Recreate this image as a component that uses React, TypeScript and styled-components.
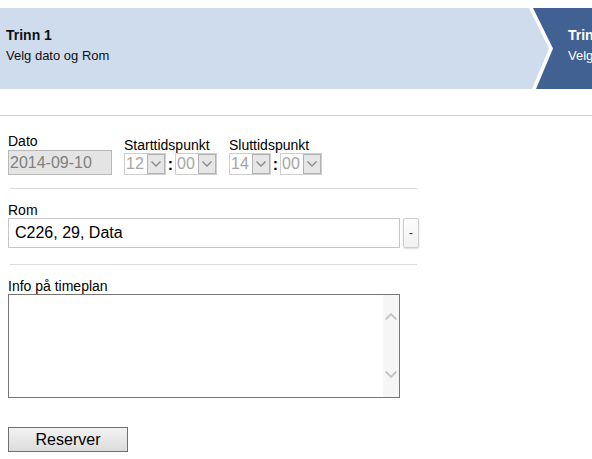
import { FC } from "react";
import { styled, createGlobalStyle } from "styled-components";

const GlobalStyle = createGlobalStyle`
  html, body {
    margin: 0;
    padding: 0;
    background: #fff;
    overflow: hidden;
  }
  body {
    font-family: "Liberation Sans", Arial, sans-serif;
    color: #000;
  }
`;

type ChevronProps = { dir: "up" | "down"; color: string; w: number; h: number; sw: number };

const Chevron: FC<ChevronProps> = ({ dir, color, w, h, sw }) => (
  <svg width={w} height={h} viewBox="0 0 10 6" fill="none">
    <path
      d={dir === "down" ? "M1 1 L5 5 L9 1" : "M1 5 L5 1 L9 5"}
      stroke={color}
      strokeWidth={sw}
      strokeLinecap="square"
    />
  </svg>
);

type TimeSelectProps = { value: string };

const TimeSelect: FC<TimeSelectProps> = ({ value }) => (
  <SelectBox>
    <span className="value">{value}</span>
    <span className="arrow">
      <Chevron dir="down" color="#8a8a8a" w={10} h={6} sw={1.4} />
    </span>
  </SelectBox>
);

export default function App() {
  return (
    <>
      <GlobalStyle />
      <Page>
        <Steps>
          <ActiveStep>
            <div className="content">
              <StepTitle>Trinn 1</StepTitle>
              <StepText>Velg dato og Rom</StepText>
            </div>
          </ActiveStep>
          <NextStep>
            <StepTitle>Trinn 2</StepTitle>
            <StepText>Velg ressurser</StepText>
          </NextStep>
        </Steps>

        <Divider />

        <Form>
          <FieldRow>
            <Field>
              <Label>Dato</Label>
              <DateInput value="2014-09-10" disabled readOnly />
            </Field>
            <Field>
              <Label>Starttidspunkt</Label>
              <TimeRow>
                <TimeSelect value="12" />
                <Colon>:</Colon>
                <TimeSelect value="00" />
              </TimeRow>
            </Field>
            <Field>
              <Label>Sluttidspunkt</Label>
              <TimeRow>
                <TimeSelect value="14" />
                <Colon>:</Colon>
                <TimeSelect value="00" />
              </TimeRow>
            </Field>
          </FieldRow>

          <Separator />

          <Label>Rom</Label>
          <RoomRow>
            <RoomInput value="C226, 29, Data" readOnly />
            <SmallButton type="button">-</SmallButton>
          </RoomRow>

          <Separator $gap={16} />

          <Label>Info på timeplan</Label>
          <TextBox>
            <textarea />
            <div className="scrollbar">
              <Chevron dir="up" color="#c4c4c4" w={12} h={7} sw={1.6} />
              <Chevron dir="down" color="#c4c4c4" w={12} h={7} sw={1.6} />
            </div>
          </TextBox>

          <SubmitButton type="button">Reserver</SubmitButton>
        </Form>
      </Page>
    </>
  );
}

const Page = styled.div`
  padding-top: 8px;
  width: 592px;
`;

const Steps = styled.div`
  display: grid;
  grid-template-columns: 553px 1fr;
  height: 81px;
  background: #426193;
  overflow: hidden;
`;

const ActiveStep = styled.div`
  position: relative;
  background: #fff;
  clip-path: polygon(0 0, 533px 0, 553px 50%, 536px 100%, 0 100%);

  &::before {
    content: "";
    position: absolute;
    inset: 0;
    background: #cfdced;
    clip-path: polygon(0 0, 529px 0, 549px 50%, 532px 100%, 0 100%);
  }

  > .content {
    position: relative;
    padding: 19px 0 0 6px;
    color: #111;
  }
`;

const NextStep = styled.div`
  padding: 19px 0 0 15px;
  color: #fff;
  white-space: nowrap;
`;

const StepTitle = styled.div`
  font-size: 14px;
  font-weight: bold;
  line-height: 16px;
`;

const StepText = styled.div`
  font-size: 13px;
  line-height: 15px;
  margin-top: 5px;
`;

const Divider = styled.div`
  margin-top: 26px;
  height: 1px;
  background: #d2d2d2;
`;

const Form = styled.div`
  padding: 17px 8px 0;
  display: flex;
  flex-direction: column;
  align-items: flex-start;
`;

const FieldRow = styled.div`
  display: flex;
  align-items: flex-end;
  gap: 12px;
`;

const Field = styled.div`
  display: flex;
  flex-direction: column;
`;

const Label = styled.label`
  font-size: 14px;
  line-height: 16px;
  display: block;
`;

const DateInput = styled.input`
  box-sizing: border-box;
  width: 104px;
  height: 25px;
  margin: 1px 0 0;
  padding: 0 0 0 1px;
  border: 1px solid #b8b8b8;
  background: #e4e4e4;
  color: #808080;
  font: 16px "Liberation Sans", Arial, sans-serif;
  outline: none;
`;

const TimeRow = styled.div`
  display: flex;
  align-items: center;
`;

const SelectBox = styled.div`
  box-sizing: border-box;
  width: 42px;
  height: 22px;
  border: 1px solid #cfcfcf;
  background: #fff;
  display: flex;
  align-items: stretch;
  font-size: 16px;
  color: #a5a5a5;

  > .value {
    flex: 1;
    padding-left: 1px;
    line-height: 20px;
  }

  > .arrow {
    width: 18px;
    box-sizing: border-box;
    border: 1px solid #b2b2b2;
    background: #e6e6e6;
    display: flex;
    align-items: center;
    justify-content: center;
  }
`;

const Colon = styled.span`
  width: 9px;
  text-align: center;
  font-size: 16px;
  font-weight: bold;
  line-height: 20px;
  padding-top: 2px;
`;

const Separator = styled.div<{ $gap?: number }>`
  align-self: stretch;
  margin: ${(p) => p.$gap ?? 13}px 0 13px 2px;
  width: 407px;
  height: 1px;
  background: #dcdcdc;
`;

const RoomRow = styled.div`
  display: flex;
  gap: 3px;
`;

const RoomInput = styled.input`
  box-sizing: border-box;
  width: 392px;
  height: 30px;
  margin: 0;
  padding: 0 0 0 6px;
  border: 1px solid #c6c6c6;
  font: 16px "Liberation Sans", Arial, sans-serif;
  color: #000;
  outline: none;
`;

const SmallButton = styled.button`
  box-sizing: border-box;
  width: 16px;
  height: 30px;
  padding: 0;
  border: 1px solid #cdcdcd;
  border-radius: 2px;
  background: linear-gradient(#fdfdfd, #f1f1f1);
  box-shadow: 0 1px 2px rgba(0, 0, 0, 0.15);
  font: 12px "Liberation Sans", Arial, sans-serif;
  color: #333;
`;

const TextBox = styled.div`
  box-sizing: border-box;
  width: 392px;
  height: 104px;
  border: 1px solid #767676;
  display: flex;
  background: #fff;

  > textarea {
    flex: 1;
    border: none;
    resize: none;
    outline: none;
    margin: 0;
    padding: 2px;
    font: 14px "Liberation Sans", Arial, sans-serif;
  }

  > .scrollbar {
    width: 16px;
    background: #f6f6f6;
    display: flex;
    flex-direction: column;
    align-items: center;
    justify-content: space-between;
    padding: 18px 0 19px;
  }
`;

const SubmitButton = styled.button`
  box-sizing: border-box;
  margin-top: 29px;
  width: 120px;
  height: 25px;
  padding: 0;
  border: 1px solid #707070;
  background: linear-gradient(#f2f2f2, #dcdcdc);
  font: 16px "Liberation Sans", Arial, sans-serif;
  color: #000;
`;
